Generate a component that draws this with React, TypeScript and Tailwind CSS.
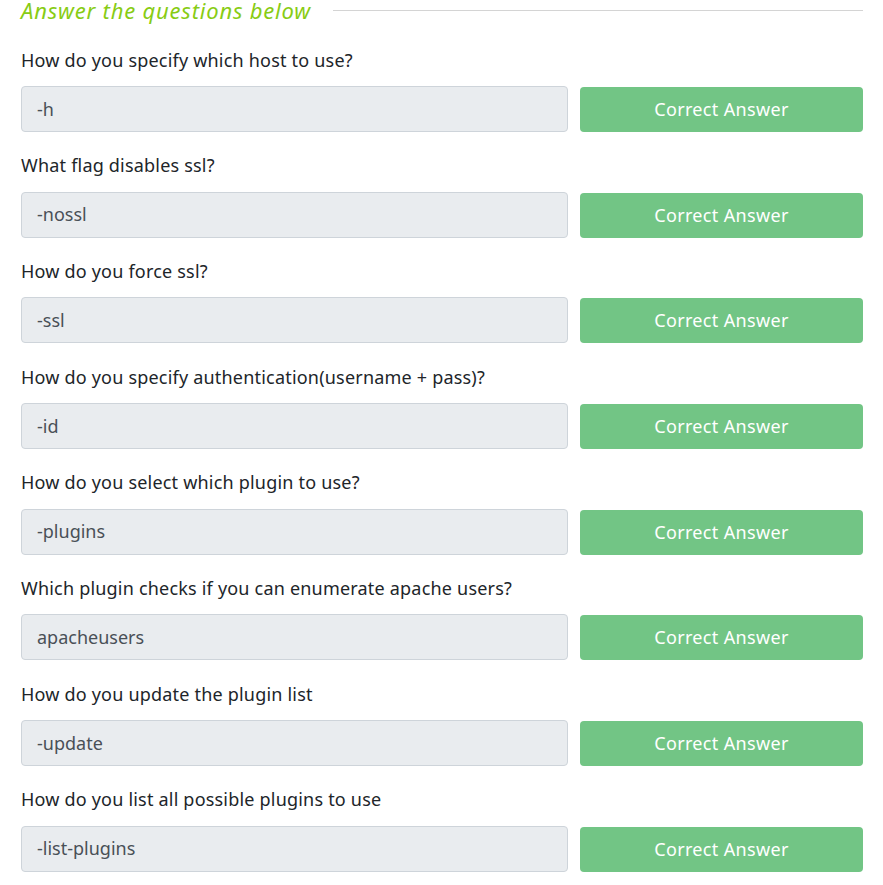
import React from 'react';

interface QA {
  question: string;
  answer: string;
}

const items: QA[] = [
  { question: 'How do you specify which host to use?', answer: '-h' },
  { question: 'What flag disables ssl?', answer: '-nossl' },
  { question: 'How do you force ssl?', answer: '-ssl' },
  { question: 'How do you specify authentication(username + pass)?', answer: '-id' },
  { question: 'How do you select which plugin to use?', answer: '-plugins' },
  { question: 'Which plugin checks if you can enumerate apache users?', answer: 'apacheusers' },
  { question: 'How do you update the plugin list', answer: '-update' },
  { question: 'How do you list all possible plugins to use', answer: '-list-plugins' },
];

const QuestionRow: React.FC<QA> = ({ question, answer }) => (
  <div className="mb-[20.2px]">
    <p className="text-[18px] leading-[27px] tracking-[0.2px] text-[#212529] mb-[12.5px]">{question}</p>
    <div className="grid grid-cols-[1fr_283px] gap-[12px]">
      {/* read-only answer box */}
      <div className="h-[46px] flex items-center px-[15px] bg-[#e9ecef] border border-[#ced4da] rounded-[4px] text-[18px] text-[#495057]">
        {answer}
      </div>
      <button className="h-[45px] mt-[1px] rounded-[4px] bg-[#72c585] text-white text-[18px] tracking-[0.35px]">
        Correct Answer
      </button>
    </div>
  </div>
);

export default function App() {
  return (
    <div
      className="w-[883px] h-[885px] overflow-hidden bg-white pl-[21px] pr-[20px]"
      style={{ fontFamily: '"Noto Sans", "Open Sans", sans-serif' }}
    >
      {/* section heading with rule */}
      <div className="flex items-center h-[20px] gap-[22px]">
        <h2 className="italic text-[22px] leading-[20px] tracking-[0.8px] text-[#88cc14] whitespace-nowrap">
          Answer the questions below
        </h2>
        <div className="flex-1 h-px bg-[#d4d4d4]" />
      </div>
      <div className="pt-[26.5px]">
        {items.map((q, i) => (
          <QuestionRow key={i} {...q} />
        ))}
      </div>
    </div>
  );
}
